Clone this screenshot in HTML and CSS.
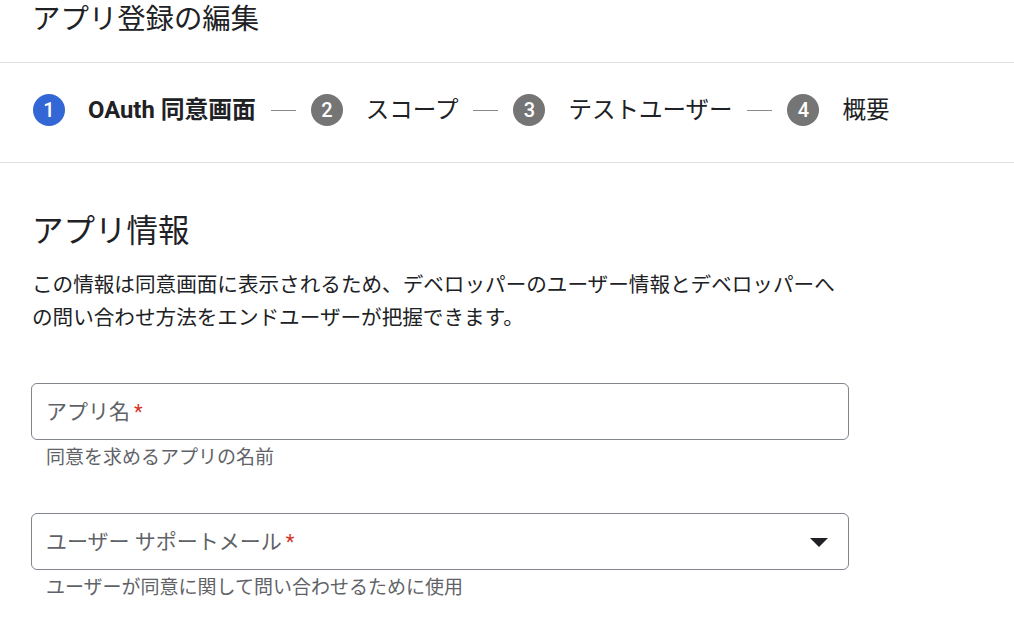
FILE: index.html
```html
<!DOCTYPE html>
<html lang="ja">
<head>
<meta charset="utf-8">
<title>アプリ登録の編集</title>
<link rel="stylesheet" href="styles.css">
</head>
<body>
<header class="page-header">
  <h1 class="page-title">アプリ登録の編集</h1>
</header>
<nav class="stepper">
  <div class="step step-active">
    <span class="step-num">1</span>
    <span class="step-label">OAuth 同意画面</span>
  </div>
  <span class="step-line"></span>
  <div class="step">
    <span class="step-num">2</span>
    <span class="step-label">スコープ</span>
  </div>
  <span class="step-line"></span>
  <div class="step">
    <span class="step-num">3</span>
    <span class="step-label">テストユーザー</span>
  </div>
  <span class="step-line"></span>
  <div class="step">
    <span class="step-num">4</span>
    <span class="step-label">概要</span>
  </div>
</nav>
<main class="content">
  <h2 class="section-title">アプリ情報</h2>
  <p class="section-desc">この情報は同意画面に表示されるため、デベロッパーのユーザー情報とデベロッパーへの問い合わせ方法をエンドユーザーが把握できます。</p>
  <div class="field">
    <div class="field-box">
      <span class="field-label">アプリ名<span class="req">*</span></span>
    </div>
    <div class="field-hint">同意を求めるアプリの名前</div>
  </div>
  <div class="field">
    <div class="field-box">
      <span class="field-label">ユーザー サポートメール<span class="req">*</span></span>
      <svg class="drop-arrow" width="18" height="9" viewBox="0 0 18 9" aria-hidden="true"><path d="M0 0 L18 0 L9 9 Z" fill="#202124"/></svg>
    </div>
    <div class="field-hint">ユーザーが同意に関して問い合わせるために使用</div>
  </div>
</main>
</body>
</html>
```

FILE: styles.css
```css
* { box-sizing: border-box; }
html, body { margin: 0; padding: 0; background: #fff; }
body {
  font-family: "Roboto", "Noto Sans CJK JP", sans-serif;
  color: #202124;
}
.page-header {
  height: 63px;
  border-bottom: 1px solid #e0e0e0;
  padding: 0 32px;
}
.page-title {
  margin: 0;
  font-size: 28.4px;
  font-weight: 400;
  line-height: 40px;
}
.stepper {
  display: flex;
  align-items: center;
  height: 100px;
  padding: 31px 32px 36px 33px;
  border-bottom: 1px solid #e0e0e0;
}
.step {
  display: flex;
  align-items: center;
  gap: 23px;
}
.step-num {
  width: 32px;
  height: 32px;
  border-radius: 50%;
  background: #757575;
  color: #fff;
  font-family: "Roboto", sans-serif;
  font-weight: 500;
  font-size: 20px;
  display: flex;
  align-items: center;
  justify-content: center;
  flex-shrink: 0;
}
.step-active .step-num { background: #3367d6; }
.step-label {
  font-size: 23.5px;
  line-height: 32px;
  color: #202124;
  white-space: nowrap;
}
.step-active .step-label { font-weight: 700; font-size: 23.8px; }
.step-line {
  width: 25px;
  height: 1px;
  background: #8a8a8a;
  margin: 0 15px;
  flex-shrink: 0;
}
.content {
  padding: 49px 31px 0;
  width: 900px;
}
.section-title {
  margin: 0 0 0 1px;
  font-size: 31.5px;
  font-weight: 400;
  line-height: 40px;
}
.section-desc {
  margin: 17px 0 0 1px;
  width: 822px;
  font-size: 20.6px;
  line-height: 33px;
}
.field { width: 818px; }
.section-desc + .field { margin-top: 48px; }
.field + .field { margin-top: 43px; }
.field-box {
  height: 57px;
  border: 1px solid #80868b;
  border-radius: 6px;
  padding: 0 20px 0 14px;
  display: flex;
  align-items: center;
  justify-content: space-between;
}
.field-label {
  font-size: 21px;
  color: #5f6368;
  line-height: 28px;
}
.req {
  color: #d93025;
  margin-left: 4px;
  font-size: 20px;
}
.drop-arrow { display: block; margin-top: 1px; }
.field-hint {
  margin-top: 6px;
  padding-left: 15px;
  font-size: 19px;
  line-height: 24px;
  color: #5f6368;
}
```
